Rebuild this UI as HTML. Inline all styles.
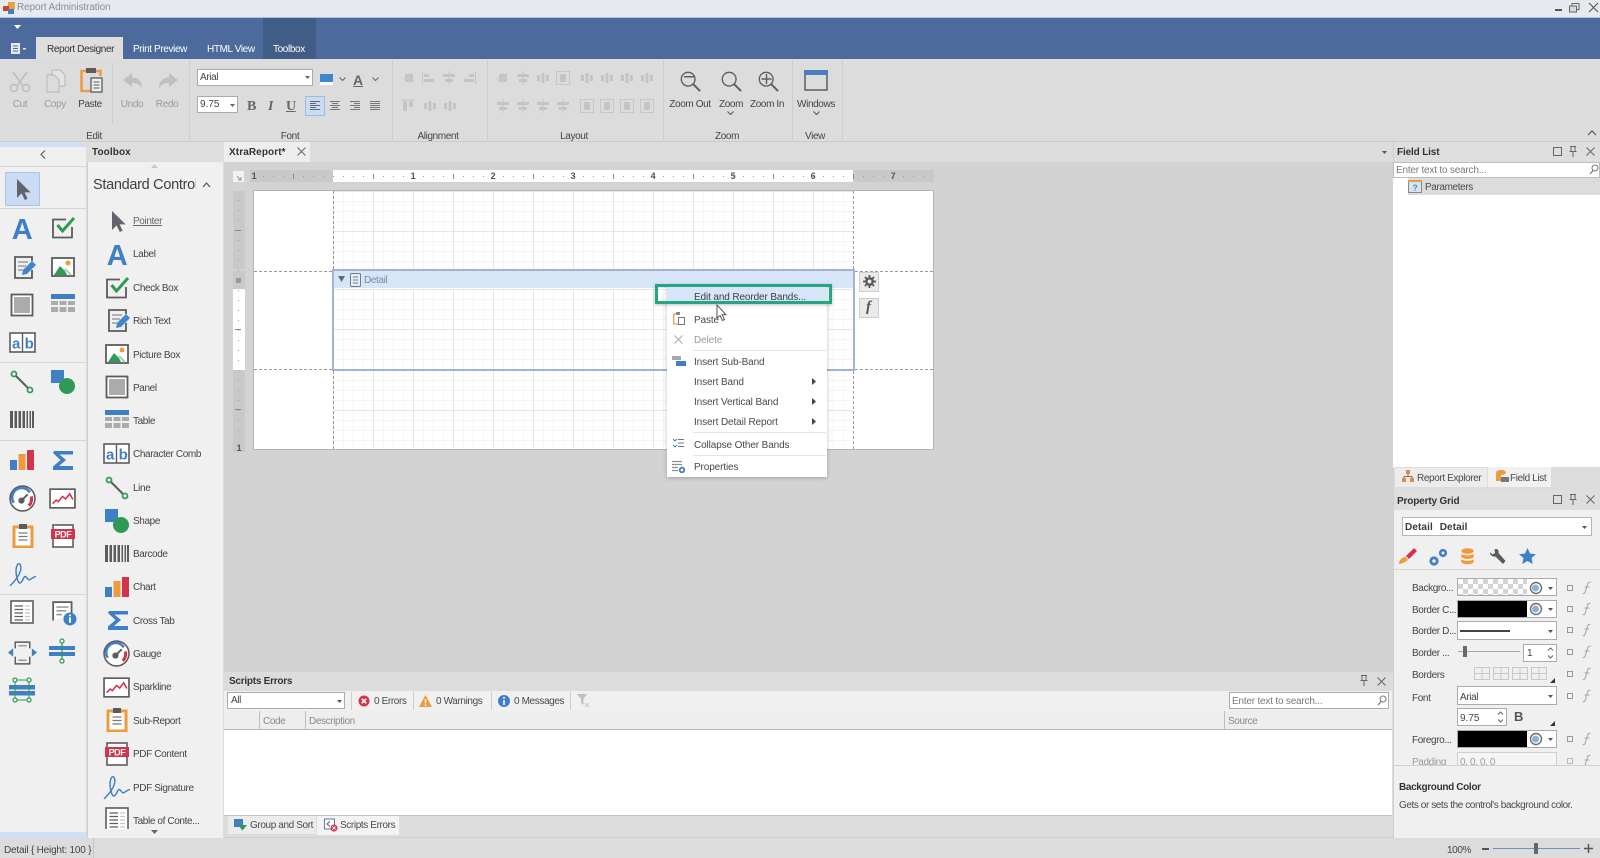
<!DOCTYPE html>
<html lang="en"><head><meta charset="utf-8"><title>Report Administration</title>
<style>
html,body{margin:0;padding:0;background:#dcdcdc}
#r{position:relative;width:1600px;height:858px;overflow:hidden;background:#dcdcdc;font:10px "Liberation Sans",sans-serif;color:#444;letter-spacing:-.38px;filter:blur(.3px)}
#r div,#r svg,#r span.t{position:absolute}
.t{white-space:nowrap;line-height:14px;height:14px;margin-top:2px}
.c{transform:translateX(-50%)}
.b{font-weight:bold;color:#333;letter-spacing:-.15px}
.g{color:#9a9a9a}
.m{letter-spacing:-.12px}
.ln{background:#cdcdcd}
.combo{background:#fff;border:1px solid #ababab;box-sizing:border-box}
.gr{background-color:#fff;background-image:linear-gradient(#e6e6e6 1px,transparent 1px),linear-gradient(90deg,#e6e6e6 1px,transparent 1px),linear-gradient(#f5f5f5 1px,transparent 1px),linear-gradient(90deg,#f5f5f5 1px,transparent 1px);background-size:40px 40px,40px 40px,10px 10px,10px 10px}
.dot{height:1px;background:repeating-linear-gradient(90deg,#999 0,#999 1px,transparent 1px,transparent 10px)}
.vdot{width:1px;background:repeating-linear-gradient(#999 0,#999 1px,transparent 1px,transparent 10px)}
.dh{height:0;border-top:1px dashed #9a9a9a}
.dv{width:0;border-left:1px dashed #9a9a9a}
.num{font:bold 9px "Liberation Sans",sans-serif;color:#555;line-height:12px;white-space:nowrap;transform:translateX(-50%)}
.tab{background:#eeeeee}
</style></head><body><div id="r">
<svg width="0" height="0" style="left:0;top:0"><defs>
<symbol id="ptr" viewBox="0 0 24 24"><path d="M6 2V21L10.6 16.4L13.8 23L16.6 21.8L13.6 15.4H19.6Z" fill="#63636c"/></symbol>
<symbol id="chk" viewBox="0 0 24 24"><path d="M20 11V21.500H1V3.500H14" fill="none" stroke="#5c5c5c" stroke-width="1.800"/><path d="M5.500 9L10.500 15L22 2" fill="none" stroke="#2f9a55" stroke-width="3"/></symbol>
<symbol id="rich" viewBox="0 0 24 24"><path d="M20 6V2H3V23H20V15" fill="none" stroke="#5c5c5c" stroke-width="1.800"/><path d="M6 7H16M6 11H14M6 15H11" stroke="#9a9a9a" stroke-width="1.400"/><path d="M10 20L11 15L20 6L24 10L15 19Z" fill="#3f86d0"/></symbol>
<symbol id="pic" viewBox="0 0 24 24"><rect x="1" y="3" width="22" height="18" fill="#fff" stroke="#5c5c5c" stroke-width="1.800"/><path d="M3 20L9 11L14 16L16 20Z" fill="#2f9a55"/><circle cx="17" cy="8" r="2.500" fill="#ef9a3d"/><path d="M14 14L20 20" stroke="#a9cfae" stroke-width="2"/></symbol>
<symbol id="pan" viewBox="0 0 24 24"><rect x="1.500" y="1.500" width="21" height="21" fill="#fff" stroke="#5c5c5c" stroke-width="1.800"/><rect x="4" y="4" width="16" height="16" fill="#ababab"/></symbol>
<symbol id="tbl" viewBox="0 0 24 24"><rect x="0" y="2" width="24" height="5" fill="#3f7fc5"/><path d="M0 9H7V13H0ZM8.500 9H15.500V13H8.500ZM17 9H24V13H17ZM0 15H7V20H0ZM8.500 15H15.500V20H8.500ZM17 15H24V20H17Z" fill="#ababab"/></symbol>
<symbol id="lin" viewBox="0 0 24 24"><path d="M5 5L19 19" stroke="#5c5c5c" stroke-width="2"/><circle cx="4" cy="4" r="2.500" fill="#fff" stroke="#2f9a55" stroke-width="1.800"/><circle cx="20" cy="20" r="2.500" fill="#fff" stroke="#2f9a55" stroke-width="1.800"/></symbol>
<symbol id="shp" viewBox="0 0 24 24"><rect x="0" y="0" width="13" height="13" fill="#3f7fc5"/><circle cx="16" cy="16" r="8" fill="#2f9a55"/></symbol>
<symbol id="bar" viewBox="0 0 24 24"><path d="M0 3H3V20H0ZM4.500 3H7V20H4.500ZM8.500 3H11V20H8.500ZM12.500 3H15V20H12.500ZM16.500 3H18V20H16.500ZM19.500 3H21V20H19.500ZM22 3H24V20H22Z" fill="#5c5c5c"/></symbol>
<symbol id="cht" viewBox="0 0 24 24"><rect x="0" y="12" width="7" height="10" fill="#3f7fc5"/><rect x="8.500" y="6" width="7" height="16" fill="#ef9a3d"/><rect x="17" y="2" width="7" height="20" fill="#d43449"/></symbol>
<symbol id="sig" viewBox="0 0 24 24"><path d="M3 3H22V6.500H8.500L15 12L8 18H22V22H2V18.500L9.500 12L2 5Z" fill="#3f7fc5"/></symbol>
<symbol id="gau" viewBox="0 0 26 26"><circle cx="13" cy="13" r="12" fill="#fff" stroke="#5c5c5c" stroke-width="1.500"/><path d="M4.500 17A9 9 0 0 1 20 7" fill="none" stroke="#3f7fc5" stroke-width="2.500"/><path d="M21.500 11A9 9 0 0 1 19 20" fill="none" stroke="#d43449" stroke-width="3"/><circle cx="12" cy="15" r="3" fill="#5c5c5c"/><path d="M12 15L18 9" stroke="#5c5c5c" stroke-width="1.800"/></symbol>
<symbol id="spk" viewBox="0 0 26 24"><rect x="1" y="3" width="24" height="18" fill="#fff" stroke="#5c5c5c" stroke-width="1.600"/><path d="M3.500 17L7 13.500L9 15L13 10L16 12.500L20 7.500L23 13" fill="none" stroke="#d43449" stroke-width="1.500"/></symbol>
<symbol id="sub" viewBox="0 0 24 24"><rect x="3" y="3" width="18" height="20" fill="#fff" stroke="#ef9a3d" stroke-width="3"/><rect x="8" y="0" width="8" height="5" fill="#5c5c5c"/><path d="M7.500 9H16.500M7.500 12.500H16.500M7.500 16H16.500" stroke="#7a7a7a" stroke-width="1.300"/></symbol>
<symbol id="psg" viewBox="0 0 26 26"><path d="M1 24C7 18 13 10 11 4C9 0 6 5 7 13C8 18 9 22 11 21C14 19 14 14 16 15C18 16 18 19 20 18C22 17 24 15 26 15" fill="none" stroke="#3f7fc5" stroke-width="1.400"/></symbol>
<symbol id="toc" viewBox="0 0 24 24"><rect x="1" y="1" width="22" height="22" fill="#fff" stroke="#5c5c5c" stroke-width="1.600"/><path d="M4.500 6H13M4.500 9.500H13M4.500 13H13M4.500 16.500H13M4.500 20H13" stroke="#5c5c5c" stroke-width="1.300"/><path d="M15.500 6H20M15.500 9.500H20M15.500 13H20M15.500 16.500H20M15.500 20H20" stroke="#7a8fa8" stroke-width="1.300" stroke-dasharray="1 1"/></symbol>
<symbol id="inf" viewBox="0 0 24 24"><path d="M2 19V2H19V12" fill="#fff" stroke="#5c5c5c" stroke-width="1.600"/><path d="M5 6.500H16M5 10H14M5 13.500H10" stroke="#8d8d8d" stroke-width="1.300"/><circle cx="17.500" cy="17.500" r="6" fill="#3f7fc5"/><path d="M17.500 16V21M17.500 13.500V15" stroke="#fff" stroke-width="1.800"/></symbol>
<symbol id="fit" viewBox="0 0 28 24"><path d="M7 8V2H21V8M7 16V23H21V16" fill="none" stroke="#5c5c5c" stroke-width="1.400"/><path d="M10 5.500H18M10 19.500H18" stroke="#999" stroke-width="1.400"/><path d="M0 12L5 8V16ZM28 12L23 8V16Z" fill="#3f7fc5"/></symbol>
<symbol id="spl" viewBox="0 0 26 26"><rect x="0" y="8" width="26" height="4" fill="#3f7fc5"/><rect x="0" y="14" width="26" height="4" fill="#3f7fc5"/><path d="M13 4V22" stroke="#2f9a55" stroke-width="1.300"/><circle cx="13" cy="3" r="2" fill="#fff" stroke="#2f9a55" stroke-width="1.300"/><circle cx="13" cy="23" r="2" fill="#fff" stroke="#2f9a55" stroke-width="1.300"/></symbol>
<symbol id="spl2" viewBox="0 0 26 26"><rect x="0" y="8" width="26" height="4.500" fill="#3f7fc5"/><rect x="0" y="14" width="26" height="4.500" fill="#3f7fc5"/><path d="M6 4V22M20 4V22M6 3H20M6 23H20" stroke="#2f9a55" stroke-width="1"/><circle cx="6" cy="3" r="2" fill="#fff" stroke="#2f9a55" stroke-width="1.300"/><circle cx="20" cy="3" r="2" fill="#fff" stroke="#2f9a55" stroke-width="1.300"/><circle cx="6" cy="23" r="2" fill="#fff" stroke="#2f9a55" stroke-width="1.300"/><circle cx="20" cy="23" r="2" fill="#fff" stroke="#2f9a55" stroke-width="1.300"/></symbol>
<symbol id="a1" viewBox="0 0 14 14"><rect x="3" y="3" width="8" height="8" fill="#c4c4c4"/><path d="M7 0V14M0 7H14" stroke="#cdcdcd" stroke-dasharray="1 1"/></symbol>
<symbol id="a2" viewBox="0 0 14 14"><rect x="2" y="8" width="10" height="3" fill="#c4c4c4"/><rect x="2" y="3" width="5" height="3" fill="#c4c4c4"/><path d="M.5 1V13" stroke="#c4c4c4"/></symbol>
<symbol id="a2r" viewBox="0 0 14 14"><rect x="2" y="8" width="10" height="3" fill="#c4c4c4"/><rect x="7" y="3" width="5" height="3" fill="#c4c4c4"/><path d="M13.500 1V13" stroke="#c4c4c4"/></symbol>
<symbol id="a3" viewBox="0 0 14 14"><rect x="1" y="3" width="12" height="3" fill="#c4c4c4"/><rect x="3" y="8" width="8" height="3" fill="#c4c4c4"/><path d="M7 0V14" stroke="#c4c4c4"/></symbol>
<symbol id="a4" viewBox="0 0 14 14"><rect x="2" y="2" width="4" height="10" fill="#c4c4c4"/><rect x="8" y="2" width="4" height="6" fill="#c4c4c4"/><path d="M0 1H14" stroke="#c4c4c4"/></symbol>
<symbol id="a5" viewBox="0 0 14 14"><rect x=".5" y=".5" width="13" height="13" fill="none" stroke="#c6c6c6"/><rect x="4" y="3" width="6" height="8" fill="#c4c4c4"/></symbol>
<symbol id="a6" viewBox="0 0 14 14"><path d="M1 4H4V10H1ZM5.500 2H8.500V12H5.500ZM10 4H13V10H10Z" fill="#c4c4c4"/></symbol>
<symbol id="wh" viewBox="0 0 14 14"><circle cx="7" cy="7" r="5.500" fill="#fff" stroke="#6e6e6e" stroke-width="1.400"/><circle cx="6.500" cy="7" r="3.500" fill="#8fb0d2"/></symbol>
<symbol id="f" viewBox="0 0 10 14"><path d="M8.500 1.500C6 .8 5.500 2.500 5 5L3.500 10C3 12 2.200 13 .8 12.500M2.500 6H7.500" fill="none" stroke="#a8a8a8" stroke-width="1.100"/></symbol>
<symbol id="brd" viewBox="0 0 16 14"><rect x=".5" y=".5" width="15" height="12" fill="none" stroke="#c8c8c8"/><path d="M8 0V13M0 6.500H16" stroke="#c8c8c8"/></symbol>
<symbol id="mag" viewBox="0 0 24 24"><circle cx="10" cy="10" r="7.500" fill="none" stroke="#5e5e5e" stroke-width="1.500"/><path d="M15.500 15.500L23 23" stroke="#5e5e5e" stroke-width="2.200"/></symbol>
</defs></svg>

<!-- title bar -->
<div style="left:0;top:0;width:1600px;height:17px;background:#e6e9ee"></div>
<svg style="left:3px;top:2px" width="12" height="12" viewBox="0 0 12 12"><rect x="5" y="0" width="7" height="7" fill="#e8a33a"/><rect x="0" y="4" width="6" height="5" fill="#c8452f"/><rect x="5" y="7" width="6" height="5" fill="#3f7fc5"/></svg>
<span class="t" style="left:17px;top:-1px;color:#8b8e93;letter-spacing:-.1px">Report Administration</span>
<div style="left:1555px;top:9px;width:7px;height:2px;background:#555"></div>
<svg style="left:1569px;top:3px" width="11" height="10" viewBox="0 0 11 10"><rect x="3" y=".5" width="7" height="6" fill="none" stroke="#666"/><rect x=".5" y="3" width="7" height="6" fill="#d6d8dc" stroke="#666"/></svg>
<svg style="left:1588px;top:2px" width="11" height="11" viewBox="0 0 11 11"><path d="M1 1L10 10M10 1L1 10" stroke="#555" stroke-width="1.100"/></svg>

<!-- blue header -->
<div style="left:0;top:17px;width:1600px;height:42px;background:#4c6b9c;border-top:1px solid #a9c4e4;box-sizing:border-box"></div>
<svg style="left:14px;top:25px" width="7" height="4"><path d="M0 0H7L3.500 4Z" fill="#fff"/></svg>
<svg style="left:11px;top:43px" width="15" height="12" viewBox="0 0 15 12"><rect x="0" y="0" width="9" height="11" fill="#e6e9ee"/><path d="M2 3H7M2 5.500H7M2 8H7" stroke="#4c6b9c"/><rect x="12" y="5" width="3" height="1.500" fill="#e6e9ee"/></svg>
<div style="left:36px;top:37px;width:87px;height:22px;background:#dedede"></div>
<span class="t" style="left:47px;top:41px;color:#333">Report Designer</span>
<span class="t" style="left:133px;top:41px;color:#fff">Print Preview</span>
<span class="t" style="left:207px;top:41px;color:#fff">HTML View</span>
<div style="left:263px;top:18px;width:53px;height:41px;background:#405c87"></div>
<span class="t" style="left:273px;top:41px;color:#fff">Toolbox</span>

<!-- ribbon -->
<div style="left:0;top:59px;width:1600px;height:83px;background:#dcdcdc;border-bottom:1px solid #cbcbcb;box-sizing:border-box"></div>
<div class="ln" style="left:189px;top:60px;width:1px;height:80px"></div>
<div class="ln" style="left:392px;top:60px;width:1px;height:80px"></div>
<div class="ln" style="left:487px;top:60px;width:1px;height:80px"></div>
<div class="ln" style="left:663px;top:60px;width:1px;height:80px"></div>
<div class="ln" style="left:792px;top:60px;width:1px;height:80px"></div>
<div class="ln" style="left:842px;top:60px;width:1px;height:80px"></div>
<div class="ln" style="left:112px;top:64px;width:1px;height:60px"></div>

<svg style="left:9px;top:71px" width="22" height="22" viewBox="0 0 22 22"><path d="M4 1L14 15M18 1L8 15" stroke="#bdbdbd" stroke-width="1.600"/><circle cx="5" cy="17" r="3.500" fill="none" stroke="#bdbdbd" stroke-width="1.500"/><circle cx="17" cy="17" r="3.500" fill="none" stroke="#bdbdbd" stroke-width="1.500"/></svg>
<svg style="left:45px;top:69px" width="21" height="24" viewBox="0 0 21 24"><path d="M7 1H15L20 6V17H7Z" fill="#e4e4e4" stroke="#bdbdbd" stroke-width="1.200"/><path d="M2 6H9L14 11V23H2Z" fill="#dcdcdc" stroke="#bdbdbd" stroke-width="1.200"/></svg>
<svg style="left:80px;top:67px" width="23" height="26" viewBox="0 0 23 26"><path d="M7 4H1.500V24H11" fill="none" stroke="#ef9a3d" stroke-width="2.500"/><path d="M16 4H20.500V9" fill="none" stroke="#ef9a3d" stroke-width="2.500"/><rect x="6" y="1" width="10" height="5" fill="#5c5c5c"/><rect x="11" y="11" width="11" height="14" fill="#eee" stroke="#5c5c5c" stroke-width="1.300"/><path d="M13.500 15H19.500M13.500 18H19.500M13.500 21H19.500" stroke="#5c5c5c"/></svg>
<svg style="left:122px;top:72px" width="21" height="18" viewBox="0 0 21 18"><path d="M1 8L10 1V5.500C16 5.500 20 9 20 16C17 12 14 11 10 11V15Z" fill="#c0c0c0"/></svg>
<svg style="left:158px;top:72px" width="21" height="18" viewBox="0 0 21 18"><path d="M20 8L11 1V5.500C5 5.500 1 9 1 16C4 12 7 11 11 11V15Z" fill="#c0c0c0"/></svg>
<span class="t c g" style="left:20px;top:96px">Cut</span>
<span class="t c g" style="left:55px;top:96px">Copy</span>
<span class="t c" style="left:90px;top:96px">Paste</span>
<span class="t c g" style="left:132px;top:96px">Undo</span>
<span class="t c g" style="left:167px;top:96px">Redo</span>

<div class="combo" style="left:197px;top:69px;width:116px;height:17px"></div>
<span class="t" style="left:200px;top:69px;color:#444">Arial</span>
<svg style="left:305px;top:76px" width="5" height="3"><path d="M0 0H5L2.500 3Z" fill="#666"/></svg>
<div class="combo" style="left:197px;top:96px;width:41px;height:17px"></div>
<span class="t" style="left:200px;top:96px;color:#444;letter-spacing:0">9.75</span>
<svg style="left:230px;top:104px" width="5" height="3"><path d="M0 0H5L2.500 3Z" fill="#666"/></svg>
<div style="left:320px;top:74px;width:13px;height:8px;background:#3f86d0"></div>
<div style="left:320px;top:82px;width:13px;height:3px;background:#fff"></div>
<svg style="left:339px;top:77px" width="7" height="5"><path d="M.5 .5L3.500 3.500L6.500 .5" fill="none" stroke="#666"/></svg>
<span class="t b" style="left:353px;top:71px;font-size:14px;color:#666;text-decoration:underline">A</span>
<svg style="left:372px;top:77px" width="7" height="5"><path d="M.5 .5L3.500 3.500L6.500 .5" fill="none" stroke="#666"/></svg>
<span class="t" style="left:247px;top:98px;font:bold 14px/14px 'Liberation Serif',serif;color:#666">B</span>
<span class="t" style="left:268px;top:98px;font:italic bold 14px/14px 'Liberation Serif',serif;color:#666">I</span>
<span class="t" style="left:286px;top:98px;font:bold 14px/14px 'Liberation Serif',serif;color:#666;text-decoration:underline">U</span>
<div style="left:305px;top:96px;width:20px;height:20px;background:#c9dcf3;border:1px solid #9fbde0;box-sizing:border-box"></div>
<svg style="left:310px;top:101px" width="10" height="9"><path d="M0 .5H10M0 2.500H6M0 4.500H10M0 6.500H6M0 8.500H10" stroke="#667"/></svg>
<svg style="left:330px;top:101px" width="10" height="9"><path d="M0 .5H10M2 2.500H8M0 4.500H10M2 6.500H8M0 8.500H10" stroke="#777"/></svg>
<svg style="left:350px;top:101px" width="10" height="9"><path d="M0 .5H10M4 2.500H10M0 4.500H10M4 6.500H10M0 8.500H10" stroke="#777"/></svg>
<svg style="left:370px;top:101px" width="10" height="9"><path d="M0 .5H10M0 2.500H10M0 4.500H10M0 6.500H10M0 8.500H10" stroke="#777"/></svg>

<svg style="left:402px;top:71px" width="14" height="14"><use href="#a1"/></svg>
<svg style="left:422px;top:71px" width="14" height="14"><use href="#a2"/></svg>
<svg style="left:442px;top:71px" width="14" height="14"><use href="#a3"/></svg>
<svg style="left:462px;top:71px" width="14" height="14"><use href="#a2r"/></svg>
<svg style="left:401px;top:99px" width="14" height="14"><use href="#a4"/></svg>
<svg style="left:423px;top:99px" width="14" height="14"><use href="#a6"/></svg>
<svg style="left:443px;top:99px" width="14" height="14"><use href="#a6"/></svg>

<svg style="left:496px;top:71px" width="14" height="14"><use href="#a1"/></svg>
<svg style="left:516px;top:71px" width="14" height="14"><use href="#a3"/></svg>
<svg style="left:536px;top:71px" width="14" height="14"><use href="#a6"/></svg>
<svg style="left:556px;top:71px" width="14" height="14"><use href="#a5"/></svg>
<svg style="left:580px;top:71px" width="14" height="14"><use href="#a6"/></svg>
<svg style="left:600px;top:71px" width="14" height="14"><use href="#a6"/></svg>
<svg style="left:620px;top:71px" width="14" height="14"><use href="#a6"/></svg>
<svg style="left:640px;top:71px" width="14" height="14"><use href="#a6"/></svg>
<svg style="left:496px;top:99px" width="14" height="14"><use href="#a3"/></svg>
<svg style="left:516px;top:99px" width="14" height="14"><use href="#a3"/></svg>
<svg style="left:536px;top:99px" width="14" height="14"><use href="#a3"/></svg>
<svg style="left:556px;top:99px" width="14" height="14"><use href="#a3"/></svg>
<svg style="left:580px;top:99px" width="14" height="14"><use href="#a5"/></svg>
<svg style="left:600px;top:99px" width="14" height="14"><use href="#a5"/></svg>
<svg style="left:620px;top:99px" width="14" height="14"><use href="#a5"/></svg>
<svg style="left:640px;top:99px" width="14" height="14"><use href="#a5"/></svg>

<svg style="left:679px;top:70px" width="22" height="22"><use href="#mag"/></svg>
<svg style="left:684px;top:76px;" width="10" height="2"><rect width="10" height="1.500" fill="#5e5e5e"/></svg>
<svg style="left:720px;top:70px" width="22" height="22"><use href="#mag"/></svg>
<svg style="left:757px;top:70px" width="22" height="22"><use href="#mag"/></svg>
<svg style="left:761px;top:74px" width="11" height="11"><path d="M5.500 0V10M.5 5H10.500" stroke="#5e5e5e" stroke-width="1.400"/></svg>
<span class="t c" style="left:690px;top:96px">Zoom Out</span>
<span class="t c" style="left:731px;top:96px">Zoom</span>
<span class="t c" style="left:767px;top:96px">Zoom In</span>
<svg style="left:727px;top:111px" width="7" height="5"><path d="M.5 .5L3.500 3.500L6.500 .5" fill="none" stroke="#555"/></svg>
<svg style="left:804px;top:70px" width="24" height="21" viewBox="0 0 24 21"><rect x="1" y="1" width="22" height="19" fill="none" stroke="#5e5e5e" stroke-width="1.500"/><rect x="0" y="0" width="24" height="5" fill="#4a7fbe"/></svg>
<span class="t c" style="left:816px;top:96px">Windows</span>
<svg style="left:813px;top:111px" width="7" height="5"><path d="M.5 .5L3.500 3.500L6.500 .5" fill="none" stroke="#555"/></svg>
<span class="t c" style="left:94px;top:128px">Edit</span>
<span class="t c" style="left:290px;top:128px">Font</span>
<span class="t c" style="left:438px;top:128px">Alignment</span>
<span class="t c" style="left:574px;top:128px">Layout</span>
<span class="t c" style="left:727px;top:128px">Zoom</span>
<span class="t c" style="left:815px;top:128px">View</span>
<svg style="left:1587px;top:130px" width="10" height="6"><path d="M1 5L5 1L9 5" fill="none" stroke="#555" stroke-width="1.200"/></svg>

<!-- left palette -->
<div style="left:0;top:142px;width:86px;height:696px;background:#f0f0f0"></div>
<div style="left:0;top:142px;width:86px;height:5px;background:#cfe0f5"></div>
<div style="left:0;top:832px;width:86px;height:6px;background:#cfe0f5"></div>
<div style="left:0;top:166px;width:86px;height:1px;background:#d6d6d6"></div>
<svg style="left:40px;top:150px" width="6" height="9"><path d="M5 .5L1 4.500L5 8.500" fill="none" stroke="#555" stroke-width="1.100"/></svg>
<div style="left:5px;top:172px;width:35px;height:34px;background:#c9dcf3;border:1px solid #a9c4e4;box-sizing:border-box"></div>
<div class="ln" style="left:0;top:208px;width:86px;height:1px;background:#d6d6d6"></div>
<div class="ln" style="left:0;top:362px;width:86px;height:1px;background:#d6d6d6"></div>
<div class="ln" style="left:0;top:440px;width:86px;height:1px;background:#d6d6d6"></div>
<div class="ln" style="left:0;top:594px;width:86px;height:1px;background:#d6d6d6"></div>

<svg style="left:11px;top:177px" width="24" height="24"><use href="#ptr"/></svg>
<svg style="left:10px;top:215px" width="24" height="26"><text x="12" y="24" text-anchor="middle" font-family="Liberation Sans" font-weight="bold" font-size="29" fill="#3f7fc5">A</text></svg>
<svg style="left:52px;top:216px" width="24" height="24"><use href="#chk"/></svg>
<svg style="left:12px;top:255px" width="24" height="24"><use href="#rich"/></svg>
<svg style="left:51px;top:255px" width="24" height="24"><use href="#pic"/></svg>
<svg style="left:10px;top:293px" width="24" height="24"><use href="#pan"/></svg>
<svg style="left:51px;top:292px" width="24" height="24"><use href="#tbl"/></svg>
<svg style="left:9px;top:332px" width="27" height="22" viewBox="0 0 27 22"><rect x="1" y="1" width="25" height="19" fill="#fff" stroke="#5c5c5c" stroke-width="1.600"/><path d="M13.500 1V20" stroke="#5c5c5c" stroke-width="1.400"/><text x="7" y="16.500" text-anchor="middle" font-family="Liberation Sans" font-weight="bold" font-size="15" fill="#3f7fc5">a</text><text x="20" y="16.500" text-anchor="middle" font-family="Liberation Sans" font-weight="bold" font-size="15" fill="#3f7fc5">b</text></svg>
<svg style="left:10px;top:370px" width="24" height="24"><use href="#lin"/></svg>
<svg style="left:51px;top:370px" width="24" height="24"><use href="#shp"/></svg>
<svg style="left:10px;top:408px" width="24" height="24"><use href="#bar"/></svg>
<svg style="left:10px;top:448px" width="24" height="24"><use href="#cht"/></svg>
<svg style="left:51px;top:448px" width="24" height="24"><use href="#sig"/></svg>
<svg style="left:9px;top:485px" width="27" height="27"><use href="#gau"/></svg>
<svg style="left:49px;top:486px" width="27" height="25"><use href="#spk"/></svg>
<svg style="left:11px;top:524px" width="24" height="24"><use href="#sub"/></svg>
<svg style="left:51px;top:524px" width="24" height="24" viewBox="0 0 24 24"><rect x="2" y="1" width="20" height="22" fill="#fff" stroke="#5c5c5c" stroke-width="1.600"/><rect x="0" y="5" width="24" height="10" fill="#d43449"/><text x="12" y="13.500" text-anchor="middle" font-family="Liberation Sans" font-weight="bold" font-size="9" fill="#fff">PDF</text></svg>
<svg style="left:9px;top:561px" width="27" height="27"><use href="#psg"/></svg>
<svg style="left:10px;top:600px" width="24" height="24"><use href="#toc"/></svg>
<svg style="left:51px;top:600px" width="26" height="26"><use href="#inf"/></svg>
<svg style="left:8px;top:640px" width="29" height="25"><use href="#fit"/></svg>
<svg style="left:49px;top:638px" width="26" height="26"><use href="#spl"/></svg>
<svg style="left:9px;top:677px" width="26" height="26"><use href="#spl2"/></svg>

<!-- toolbox -->
<div style="left:87px;top:142px;width:136px;height:696px;background:#f0f0f0;border-left:1px solid #cfcfcf;box-sizing:border-box"></div>
<div style="left:87px;top:142px;width:136px;height:20px;background:#dedede"></div>
<span class="t b" style="left:92px;top:144px;letter-spacing:.1px">Toolbox</span>
<svg style="left:151px;top:164px" width="7" height="4"><path d="M0 4H7L3.500 0Z" fill="#c8c8c8"/></svg>
<span class="t" style="left:93px;top:176px;font-size:14.500px;line-height:15px;height:15px;width:103px;overflow:hidden;letter-spacing:-.3px;color:#3f3f3f">Standard Controls</span>
<svg style="left:202px;top:182px" width="9" height="6"><path d="M1 5L4.500 1L8 5" fill="none" stroke="#555" stroke-width="1.200"/></svg>

<svg style="left:106px;top:209px" width="24" height="24"><use href="#ptr"/></svg><span class="t" style="left:133px;top:213px;text-decoration:underline;color:#666">Pointer</span>
<svg style="left:105px;top:241px" width="24" height="26"><text x="12" y="24" text-anchor="middle" font-family="Liberation Sans" font-weight="bold" font-size="29" fill="#3f7fc5">A</text></svg><span class="t" style="left:133px;top:246px">Label</span>
<svg style="left:106px;top:276px" width="24" height="24"><use href="#chk"/></svg><span class="t" style="left:133px;top:280px">Check Box</span>
<svg style="left:106px;top:308px" width="24" height="24"><use href="#rich"/></svg><span class="t" style="left:133px;top:313px">Rich Text</span>
<svg style="left:105px;top:342px" width="24" height="24"><use href="#pic"/></svg><span class="t" style="left:133px;top:347px">Picture Box</span>
<svg style="left:105px;top:375px" width="24" height="24"><use href="#pan"/></svg><span class="t" style="left:133px;top:380px">Panel</span>
<svg style="left:105px;top:408px" width="24" height="24"><use href="#tbl"/></svg><span class="t" style="left:133px;top:413px">Table</span>
<svg style="left:103px;top:443px" width="27" height="22" viewBox="0 0 27 22"><rect x="1" y="1" width="25" height="19" fill="#fff" stroke="#5c5c5c" stroke-width="1.600"/><path d="M13.500 1V20" stroke="#5c5c5c" stroke-width="1.400"/><text x="7" y="16.500" text-anchor="middle" font-family="Liberation Sans" font-weight="bold" font-size="15" fill="#3f7fc5">a</text><text x="20" y="16.500" text-anchor="middle" font-family="Liberation Sans" font-weight="bold" font-size="15" fill="#3f7fc5">b</text></svg><span class="t" style="left:133px;top:446px">Character Comb</span>
<svg style="left:105px;top:476px" width="24" height="24"><use href="#lin"/></svg><span class="t" style="left:133px;top:480px">Line</span>
<svg style="left:105px;top:509px" width="24" height="24"><use href="#shp"/></svg><span class="t" style="left:133px;top:513px">Shape</span>
<svg style="left:105px;top:542px" width="24" height="24"><use href="#bar"/></svg><span class="t" style="left:133px;top:546px">Barcode</span>
<svg style="left:105px;top:575px" width="24" height="24"><use href="#cht"/></svg><span class="t" style="left:133px;top:579px">Chart</span>
<svg style="left:106px;top:608px" width="24" height="24"><use href="#sig"/></svg><span class="t" style="left:133px;top:613px">Cross Tab</span>
<svg style="left:103px;top:640px" width="27" height="27"><use href="#gau"/></svg><span class="t" style="left:133px;top:646px">Gauge</span>
<svg style="left:103px;top:675px" width="27" height="25"><use href="#spk"/></svg><span class="t" style="left:133px;top:679px">Sparkline</span>
<svg style="left:105px;top:708px" width="24" height="24"><use href="#sub"/></svg><span class="t" style="left:133px;top:713px">Sub-Report</span>
<svg style="left:105px;top:742px" width="24" height="24" viewBox="0 0 24 24"><rect x="2" y="1" width="20" height="22" fill="#fff" stroke="#5c5c5c" stroke-width="1.600"/><rect x="0" y="5" width="24" height="10" fill="#d43449"/><text x="12" y="13.500" text-anchor="middle" font-family="Liberation Sans" font-weight="bold" font-size="9" fill="#fff">PDF</text></svg><span class="t" style="left:133px;top:746px">PDF Content</span>
<svg style="left:103px;top:774px" width="27" height="27"><use href="#psg"/></svg><span class="t" style="left:133px;top:780px">PDF Signature</span>
<div style="left:105px;top:807px;width:24px;height:22px;overflow:hidden"><svg style="left:0;top:0" width="24" height="24"><use href="#toc"/></svg></div><span class="t" style="left:133px;top:813px">Table of Conte...</span>
<svg style="left:151px;top:830px" width="7" height="4"><path d="M0 0H7L3.500 4Z" fill="#666"/></svg>

<!-- doc tabs -->
<div style="left:223px;top:142px;width:1170px;height:20px;background:#dcdcdc"></div>
<div class="tab" style="left:224px;top:142px;width:86px;height:20px"></div>
<span class="t b" style="left:229px;top:144px;letter-spacing:.1px">XtraReport*</span>
<svg style="left:297px;top:147px" width="9" height="9"><path d="M.5 .5L8.500 8.500M8.500 .5L.5 8.500" stroke="#666"/></svg>
<svg style="left:1382px;top:151px" width="5" height="3"><path d="M0 0H5L2.500 3Z" fill="#555"/></svg>

<!-- design surface -->
<div style="left:224px;top:162px;width:1169px;height:510px;background:#d3d3d3"></div>
<div style="left:233px;top:171px;width:11px;height:11px;background:#f2f2f2"></div>
<svg style="left:237px;top:176px" width="5" height="5"><path d="M0 0L4 4M4 1V4H1" fill="none" stroke="#999"/></svg>
<div style="left:250px;top:170px;width:83px;height:12px;background:#c9c9c9"></div>
<div style="left:333px;top:170px;width:520px;height:12px;background:#fff"></div>
<div style="left:853px;top:170px;width:81px;height:12px;background:#c9c9c9"></div>
<div class="dot" style="left:263px;top:176px;width:670px"></div>
<div class="num" style="left:254px;top:170px">1</div>
<div class="num" style="left:413px;top:170px">1</div>
<div class="num" style="left:493px;top:170px">2</div>
<div class="num" style="left:573px;top:170px">3</div>
<div class="num" style="left:653px;top:170px">4</div>
<div class="num" style="left:733px;top:170px">5</div>
<div class="num" style="left:813px;top:170px">6</div>
<div class="num" style="left:893px;top:170px">7</div>
<div style="left:293px;top:174px;width:1px;height:5px;background:#888"></div>
<div style="left:373px;top:174px;width:1px;height:5px;background:#888"></div>
<div style="left:453px;top:174px;width:1px;height:5px;background:#888"></div>
<div style="left:533px;top:174px;width:1px;height:5px;background:#888"></div>
<div style="left:613px;top:174px;width:1px;height:5px;background:#888"></div>
<div style="left:693px;top:174px;width:1px;height:5px;background:#888"></div>
<div style="left:773px;top:174px;width:1px;height:5px;background:#888"></div>
<div style="left:853px;top:174px;width:1px;height:5px;background:#888"></div>

<div style="left:233px;top:191px;width:12px;height:78px;background:#c9c9c9"></div>
<div style="left:233px;top:271px;width:12px;height:18px;background:#c9c9c9"></div>
<div style="left:233px;top:289px;width:12px;height:81px;background:#fff"></div>
<div style="left:233px;top:370px;width:12px;height:82px;background:#c9c9c9"></div>
<div class="vdot" style="left:238px;top:200px;width:1px;height:240px"></div>
<div style="left:235px;top:230px;width:6px;height:1px;background:#888"></div>
<div style="left:235px;top:329px;width:6px;height:1px;background:#888"></div>
<div style="left:235px;top:409px;width:6px;height:1px;background:#888"></div>
<div style="left:236px;top:278px;width:5px;height:5px;background:#999"></div>
<div class="num" style="left:239px;top:442px">1</div>

<div style="left:253px;top:190px;width:681px;height:260px;background:#fff;border:1px solid #b4b4b4;box-sizing:border-box"></div>
<div class="gr" style="left:333px;top:191px;width:520px;height:79px"></div>
<div class="gr" style="left:333px;top:289px;width:520px;height:81px"></div>
<div class="gr" style="left:333px;top:370px;width:520px;height:79px"></div>
<div class="dh" style="left:254px;top:271px;width:679px"></div>
<div class="dh" style="left:254px;top:369px;width:679px"></div>
<div class="dv" style="left:333px;top:191px;height:258px"></div>
<div class="dv" style="left:853px;top:191px;height:258px"></div>
<div style="left:333px;top:270px;width:520px;height:18px;background:#d6e5f8"></div>
<div style="left:332px;top:269px;width:523px;height:102px;border:2px solid #a0b3d0;box-sizing:border-box"></div>
<svg style="left:338px;top:276px" width="7" height="6"><path d="M0 0H7L3.500 6Z" fill="#5e6c7e"/></svg>
<svg style="left:350px;top:273px" width="11" height="14" viewBox="0 0 11 14"><rect x=".5" y=".5" width="10" height="13" rx="1" fill="#e4ecf6" stroke="#6f7f93"/><path d="M3 4H8M3 7H8M3 10H8" stroke="#6f7f93"/></svg>
<span class="t" style="left:364px;top:272px;color:#7c8ca2">Detail</span>

<div style="left:859px;top:272px;width:20px;height:20px;background:#eaeaea;border:1px solid #cdcdcd;box-sizing:border-box"></div>
<svg style="left:863px;top:275px" width="13" height="13" viewBox="0 0 13 13"><circle cx="6.500" cy="6.500" r="3.200" fill="none" stroke="#555" stroke-width="2.400"/><path d="M6.500 0V13M0 6.500H13M2 2L11 11M11 2L2 11" stroke="#555" stroke-width="1.800" stroke-dasharray="2.200 8.600 2.200 0"/></svg>
<div style="left:859px;top:298px;width:20px;height:20px;background:#eaeaea;border:1px solid #cdcdcd;box-sizing:border-box"></div>
<span class="t" style="left:866px;top:298px;font:italic bold 15px/15px 'Liberation Serif',serif;color:#555">f</span>

<!-- context menu -->
<div style="left:667px;top:286px;width:160px;height:191px;background:#fff;box-shadow:0 1px 4px rgba(0,0,0,.25)"></div>
<div style="left:667px;top:286px;width:160px;height:17px;background:#d6e5f8"></div>
<div style="left:655px;top:284px;width:177px;height:20px;border:3px solid #25a682;box-sizing:border-box;box-shadow:0 1px 3px rgba(0,0,0,.25)"></div>
<span class="t m" style="left:694px;top:289px;color:#3f3f3f">Edit and Reorder Bands...</span>
<span class="t m" style="left:694px;top:312px;color:#4a4a4a">Paste</span>
<span class="t g m" style="left:694px;top:332px">Delete</span>
<span class="t m" style="left:694px;top:354px;color:#4a4a4a">Insert Sub-Band</span>
<span class="t m" style="left:694px;top:374px;color:#4a4a4a">Insert Band</span>
<span class="t m" style="left:694px;top:394px;color:#4a4a4a">Insert Vertical Band</span>
<span class="t m" style="left:694px;top:414px;color:#4a4a4a">Insert Detail Report</span>
<span class="t m" style="left:694px;top:437px;color:#4a4a4a">Collapse Other Bands</span>
<span class="t m" style="left:694px;top:459px;color:#4a4a4a">Properties</span>
<div style="left:693px;top:350px;width:133px;height:1px;background:#e4e4e4"></div>
<div style="left:693px;top:432px;width:133px;height:1px;background:#e4e4e4"></div>
<div style="left:693px;top:455px;width:133px;height:1px;background:#e4e4e4"></div>
<svg style="left:812px;top:378px" width="4" height="7"><path d="M0 0L4 3.500L0 7Z" fill="#444"/></svg>
<svg style="left:812px;top:398px" width="4" height="7"><path d="M0 0L4 3.500L0 7Z" fill="#444"/></svg>
<svg style="left:812px;top:418px" width="4" height="7"><path d="M0 0L4 3.500L0 7Z" fill="#444"/></svg>
<svg style="left:673px;top:312px" width="12" height="13" viewBox="0 0 12 13"><path d="M3 2H.7V12H5" fill="none" stroke="#e6a25c" stroke-width="1.300"/><rect x="3" y="0" width="4" height="3" fill="#888"/><rect x="5.500" y="5.500" width="6" height="7" fill="#fff" stroke="#777"/></svg>
<svg style="left:674px;top:335px" width="9" height="9"><path d="M.5 .5L8.500 8.500M8.500 .5L.5 8.500" stroke="#b0b0b0" stroke-width="1.200"/></svg>
<svg style="left:672px;top:356px" width="14" height="10"><rect x="0" y="0" width="9" height="4" fill="#a8a8a8"/><rect x="4" y="5" width="10" height="5" fill="#3f7fc5"/></svg>
<svg style="left:673px;top:438px" width="11" height="10"><path d="M5 1.500H11M5 5H11M5 8.500H11" stroke="#777" stroke-width="1.100"/><path d="M0 1L2 3L4 1M0 7L2 9L4 7" fill="none" stroke="#3f7fc5"/></svg>
<svg style="left:672px;top:460px" width="13" height="13"><path d="M0 1.500H10M0 4.500H10M0 7.500H6M0 10.500H6" stroke="#8e8e8e" stroke-width="1.200"/><circle cx="10" cy="10" r="2.300" fill="#fff" stroke="#3f7fc5" stroke-width="1.800"/></svg>
<svg style="left:716px;top:304px" width="13" height="18" viewBox="0 0 13 18"><path d="M1 1V14L4 11.500L6.500 16.500L8.500 15.500L6.200 10.800H10Z" fill="#fff" stroke="#555" stroke-width="1"/></svg>

<!-- right panels -->
<div style="left:1393px;top:142px;width:207px;height:696px;background:#f0f0f0;border-left:1px solid #cfcfcf;box-sizing:border-box"></div>
<div style="left:1394px;top:142px;width:206px;height:20px;background:#dedede"></div>
<span class="t b" style="left:1397px;top:144px">Field List</span>
<svg style="left:1553px;top:147px" width="9" height="9"><rect x=".5" y=".5" width="8" height="8" fill="none" stroke="#666"/></svg>
<svg style="left:1569px;top:146px" width="8" height="11"><path d="M1 .5H7M2 .5V5M6 .5V5M.5 5.500H7.500M4 5.500V11" fill="none" stroke="#666"/></svg>
<svg style="left:1586px;top:147px" width="9" height="9"><path d="M.5 .5L8.500 8.500M8.500 .5L.5 8.500" stroke="#666"/></svg>
<div style="left:1393px;top:162px;width:207px;height:306px;background:#fff"></div>
<div style="left:1393px;top:162px;width:207px;height:16px;background:#fff;border:1px solid #bdbdbd;box-sizing:border-box"></div>
<span class="t" style="left:1396px;top:162px;color:#7a7a7a;letter-spacing:-.2px">Enter text to search...</span>
<svg style="left:1589px;top:164px" width="10" height="11"><circle cx="6" cy="4" r="3" fill="none" stroke="#777"/><path d="M4 6.500L1 10" stroke="#777" stroke-width="1.200"/></svg>
<div style="left:1408px;top:178px;width:192px;height:17px;background:#dcdcdc"></div>
<svg style="left:1408px;top:180px" width="14" height="13" viewBox="0 0 14 13"><rect x=".5" y=".5" width="13" height="12" fill="#d9e3ee" stroke="#888"/><rect x="0" y="0" width="14" height="2" fill="#e59a4e"/><text x="7" y="10.500" text-anchor="middle" font-family="Liberation Sans" font-weight="bold" font-size="8" fill="#3f7fc5">?</text></svg>
<span class="t" style="left:1425px;top:179px;color:#4a4a4a">Parameters</span>

<div style="left:1394px;top:467px;width:206px;height:23px;background:#dcdcdc"></div>
<div style="left:1395px;top:468px;width:92px;height:19px;background:#ececec"></div>
<div style="left:1488px;top:467px;width:63px;height:20px;background:#f1f1f1"></div>
<svg style="left:1402px;top:470px" width="12" height="12"><rect x="4" y="0" width="4" height="4" fill="#e08a3c"/><rect x="0" y="8" width="4" height="4" fill="#e08a3c"/><rect x="8" y="8" width="4" height="4" fill="#e08a3c"/><path d="M6 4V6.500M2 8V6.500H10V8" fill="none" stroke="#777"/></svg>
<span class="t" style="left:1417px;top:470px;color:#4a4a4a">Report Explorer</span>
<svg style="left:1496px;top:470px" width="13" height="13"><ellipse cx="5" cy="2.500" rx="5" ry="2.500" fill="#ef9a3d"/><rect x="0" y="3" width="5" height="8" fill="#ef9a3d"/><rect x="5" y="7" width="8" height="5" fill="#777"/></svg>
<span class="t" style="left:1510px;top:470px;color:#4a4a4a">Field List</span>

<div style="left:1394px;top:490px;width:206px;height:20px;background:#dedede"></div>
<span class="t b" style="left:1397px;top:493px">Property Grid</span>
<svg style="left:1553px;top:495px" width="9" height="9"><rect x=".5" y=".5" width="8" height="8" fill="none" stroke="#666"/></svg>
<svg style="left:1569px;top:494px" width="8" height="11"><path d="M1 .5H7M2 .5V5M6 .5V5M.5 5.500H7.500M4 5.500V11" fill="none" stroke="#666"/></svg>
<svg style="left:1586px;top:495px" width="9" height="9"><path d="M.5 .5L8.500 8.500M8.500 .5L.5 8.500" stroke="#666"/></svg>
<div style="left:1402px;top:517px;width:190px;height:19px;background:#fff;border:1px solid #b5b5b5;box-sizing:border-box"></div>
<span class="t b" style="left:1405px;top:519px;color:#3a3a3a;word-spacing:4px;letter-spacing:.1px">Detail Detail</span>
<svg style="left:1582px;top:526px" width="5" height="3"><path d="M0 0H5L2.500 3Z" fill="#555"/></svg>

<svg style="left:1398px;top:547px" width="20" height="18" viewBox="0 0 20 18"><path d="M1 17C1 13 4 10 8 10L10 13C7 15 4 17 1 17Z" fill="#ef9a3d"/><path d="M8 9L16 1L19 4L11 12Z" fill="#d43449"/></svg>
<svg style="left:1429px;top:548px" width="19" height="18" viewBox="0 0 19 18"><circle cx="14" cy="5" r="2.800" fill="none" stroke="#3f7fc5" stroke-width="2.600"/><circle cx="5" cy="13" r="3.200" fill="none" stroke="#3f7fc5" stroke-width="2.800"/></svg>
<svg style="left:1461px;top:548px" width="13" height="17" viewBox="0 0 13 17"><ellipse cx="6.500" cy="3" rx="6.200" ry="2.800" fill="#ef9a3d"/><path d="M.3 5.500C2 8 11 8 12.700 5.500V9C11 11.500 2 11.500 .3 9ZM.3 11C2 13.500 11 13.500 12.700 11V14C11 17 2 17 .3 14Z" fill="#ef9a3d"/></svg>
<svg style="left:1489px;top:548px" width="17" height="17" viewBox="0 0 17 17"><path d="M1 4L3.500 6.500L6 5L5.500 1.500C8 0 10 2 9.500 5L16.500 13L14 16L6.500 8.500C3 9 1 7 1 4Z" fill="#5a5a5a"/></svg>
<svg style="left:1519px;top:548px" width="17" height="16" viewBox="0 0 17 16"><path d="M8.500 0L11 5.500L17 6.200L12.500 10L13.800 16L8.500 13L3.200 16L4.500 10L0 6.200L6 5.500Z" fill="#3f7fc5"/></svg>
<div style="left:1394px;top:569px;width:206px;height:1px;background:#d4d4d4"></div>

<span class="t" style="left:1412px;top:580px">Backgro...</span>
<span class="t" style="left:1412px;top:602px">Border C...</span>
<span class="t" style="left:1412px;top:623px">Border D...</span>
<span class="t" style="left:1412px;top:645px">Border ...</span>
<span class="t" style="left:1412px;top:667px">Borders</span>
<span class="t" style="left:1412px;top:690px">Font</span>
<span class="t" style="left:1412px;top:732px">Foregro...</span>
<span class="t g" style="left:1412px;top:754px">Padding</span>

<div class="combo" style="left:1457px;top:578px;width:100px;height:18px"></div>
<div style="left:1458px;top:579px;width:69px;height:16px;background:conic-gradient(#d4d4d4 25%,#fff 0 50%,#d4d4d4 0 75%,#fff 0);background-size:10px 10px"></div>
<svg style="left:1529px;top:581px" width="14" height="14"><use href="#wh"/></svg>
<svg style="left:1548px;top:587px" width="5" height="3"><path d="M0 0H5L2.500 3Z" fill="#555"/></svg>
<div class="combo" style="left:1457px;top:600px;width:100px;height:18px"></div>
<div style="left:1458px;top:601px;width:69px;height:16px;background:#000"></div>
<svg style="left:1529px;top:602px" width="14" height="14"><use href="#wh"/></svg>
<svg style="left:1548px;top:608px" width="5" height="3"><path d="M0 0H5L2.500 3Z" fill="#555"/></svg>
<div class="combo" style="left:1457px;top:621px;width:100px;height:19px"></div>
<div style="left:1460px;top:630px;width:50px;height:1.500px;background:#444"></div>
<svg style="left:1548px;top:630px" width="5" height="3"><path d="M0 0H5L2.500 3Z" fill="#555"/></svg>
<div style="left:1458px;top:651px;width:62px;height:1px;background:#aaa"></div>
<div style="left:1463px;top:646px;width:4px;height:11px;background:#6a6a6a"></div>
<div class="combo" style="left:1523px;top:644px;width:34px;height:18px"></div>
<span class="t" style="left:1527px;top:645px">1</span>
<svg style="left:1547px;top:647px" width="7" height="12"><path d="M1 3.500L3.500 1L6 3.500M1 8.500L3.500 11L6 8.500" fill="none" stroke="#666"/></svg>
<svg style="left:1474px;top:667px" width="16" height="14"><use href="#brd"/></svg>
<svg style="left:1493px;top:667px" width="16" height="14"><use href="#brd"/></svg>
<svg style="left:1512px;top:667px" width="16" height="14"><use href="#brd"/></svg>
<svg style="left:1531px;top:667px" width="16" height="14"><use href="#brd"/></svg>
<svg style="left:1550px;top:678px" width="5" height="5"><path d="M5 0V5H0Z" fill="#333"/></svg>
<div class="combo" style="left:1457px;top:686px;width:100px;height:19px"></div>
<span class="t" style="left:1460px;top:689px">Arial</span>
<svg style="left:1548px;top:695px" width="5" height="3"><path d="M0 0H5L2.500 3Z" fill="#555"/></svg>
<div class="combo" style="left:1457px;top:708px;width:50px;height:18px"></div>
<span class="t" style="left:1460px;top:710px;letter-spacing:0">9.75</span>
<svg style="left:1497px;top:711px" width="7" height="12"><path d="M1 3.500L3.500 1L6 3.500M1 8.500L3.500 11L6 8.500" fill="none" stroke="#666"/></svg>
<span class="t" style="left:1514px;top:708px;font:bold 13px/14px 'Liberation Sans',sans-serif;color:#555">B</span>
<svg style="left:1550px;top:721px" width="5" height="5"><path d="M5 0V5H0Z" fill="#333"/></svg>
<div class="combo" style="left:1457px;top:730px;width:100px;height:18px"></div>
<div style="left:1458px;top:731px;width:69px;height:16px;background:#000"></div>
<svg style="left:1529px;top:732px" width="14" height="14"><use href="#wh"/></svg>
<svg style="left:1548px;top:738px" width="5" height="3"><path d="M0 0H5L2.500 3Z" fill="#555"/></svg>
<div style="left:1457px;top:752px;width:100px;height:14px;background:#f5f5f5;border:1px solid #cfcfcf;box-sizing:border-box"></div>
<span class="t g" style="left:1460px;top:754px">0, 0, 0, 0</span>

<svg style="left:1567px;top:585px" width="6" height="6"><rect x=".5" y=".5" width="5" height="5" fill="none" stroke="#999"/></svg><svg style="left:1582px;top:581px" width="10" height="14"><use href="#f"/></svg>
<svg style="left:1567px;top:606px" width="6" height="6"><rect x=".5" y=".5" width="5" height="5" fill="none" stroke="#999"/></svg><svg style="left:1582px;top:602px" width="10" height="14"><use href="#f"/></svg>
<svg style="left:1567px;top:627px" width="6" height="6"><rect x=".5" y=".5" width="5" height="5" fill="none" stroke="#999"/></svg><svg style="left:1582px;top:623px" width="10" height="14"><use href="#f"/></svg>
<svg style="left:1567px;top:649px" width="6" height="6"><rect x=".5" y=".5" width="5" height="5" fill="none" stroke="#999"/></svg><svg style="left:1582px;top:645px" width="10" height="14"><use href="#f"/></svg>
<svg style="left:1567px;top:671px" width="6" height="6"><rect x=".5" y=".5" width="5" height="5" fill="none" stroke="#999"/></svg><svg style="left:1582px;top:667px" width="10" height="14"><use href="#f"/></svg>
<svg style="left:1567px;top:693px" width="6" height="6"><rect x=".5" y=".5" width="5" height="5" fill="none" stroke="#999"/></svg><svg style="left:1582px;top:689px" width="10" height="14"><use href="#f"/></svg>
<svg style="left:1567px;top:736px" width="6" height="6"><rect x=".5" y=".5" width="5" height="5" fill="none" stroke="#999"/></svg><svg style="left:1582px;top:732px" width="10" height="14"><use href="#f"/></svg>
<svg style="left:1567px;top:758px" width="6" height="6"><rect x=".5" y=".5" width="5" height="5" fill="none" stroke="#bbb"/></svg><svg style="left:1582px;top:754px" width="10" height="14"><use href="#f"/></svg>

<div style="left:1394px;top:765px;width:206px;height:73px;background:#f0f0f0;border-top:1px solid #d0d0d0;box-sizing:border-box"></div>
<span class="t b" style="left:1399px;top:779px;letter-spacing:-.35px">Background Color</span>
<span class="t" style="left:1399px;top:797px;color:#4a4a4a;letter-spacing:-.42px">Gets or sets the control's background color.</span>

<!-- scripts errors -->
<div style="left:224px;top:672px;width:1169px;height:166px;background:#dcdcdc"></div>
<span class="t b" style="left:229px;top:673px;letter-spacing:-.25px">Scripts Errors</span>
<svg style="left:1360px;top:675px" width="8" height="11"><path d="M1 .5H7M2 .5V5M6 .5V5M.5 5.500H7.500M4 5.500V11" fill="none" stroke="#666"/></svg>
<svg style="left:1377px;top:677px" width="9" height="9"><path d="M.5 .5L8.500 8.500M8.500 .5L.5 8.500" stroke="#666"/></svg>
<div style="left:224px;top:691px;width:1168px;height:20px;background:#f0f0f0"></div>
<div class="combo" style="left:227px;top:692px;width:118px;height:17px"></div>
<span class="t" style="left:231px;top:692px">All</span>
<svg style="left:337px;top:700px" width="5" height="3"><path d="M0 0H5L2.500 3Z" fill="#555"/></svg>
<div class="ln" style="left:351px;top:692px;width:1px;height:18px"></div>
<svg style="left:358px;top:695px" width="12" height="12"><circle cx="6" cy="6" r="5.500" fill="#d43449"/><path d="M3.800 3.800L8.200 8.200M8.200 3.800L3.800 8.200" stroke="#fff" stroke-width="1.600"/></svg>
<span class="t" style="left:374px;top:693px;color:#4a4a4a">0 Errors</span>
<div class="ln" style="left:413px;top:692px;width:1px;height:18px"></div>
<svg style="left:419px;top:695px" width="13" height="12"><path d="M6.500 0L13 12H0Z" fill="#ef9a3d"/><path d="M6.500 4V8.500M6.500 9.500V11" stroke="#fff" stroke-width="1.300"/></svg>
<span class="t" style="left:436px;top:693px;color:#4a4a4a">0 Warnings</span>
<div class="ln" style="left:491px;top:692px;width:1px;height:18px"></div>
<svg style="left:498px;top:695px" width="12" height="12"><circle cx="6" cy="6" r="6" fill="#3f7fc5"/><path d="M6 5V10M6 2V3.800" stroke="#fff" stroke-width="1.600"/></svg>
<span class="t" style="left:514px;top:693px;color:#4a4a4a">0 Messages</span>
<div class="ln" style="left:570px;top:692px;width:1px;height:18px"></div>
<svg style="left:577px;top:694px" width="13" height="13"><path d="M0 0H10L6.500 5V11L4 9V5Z" fill="#c0c0c0"/><path d="M8 9L12 13M12 9L8 13" stroke="#c9c9c9"/></svg>
<div class="combo" style="left:1229px;top:692px;width:160px;height:17px"></div>
<span class="t" style="left:1232px;top:693px;color:#7a7a7a;letter-spacing:-.2px">Enter text to search...</span>
<svg style="left:1377px;top:695px" width="10" height="11"><circle cx="6" cy="4" r="3" fill="none" stroke="#777"/><path d="M4 6.500L1 10" stroke="#777" stroke-width="1.200"/></svg>
<div style="left:224px;top:711px;width:1168px;height:18px;background:#eeeeee;border-bottom:1px solid #b9b9b9;box-sizing:content-box"></div>
<div class="ln" style="left:259px;top:711px;width:1px;height:18px;background:#bdbdbd"></div>
<div class="ln" style="left:305px;top:711px;width:1px;height:18px;background:#bdbdbd"></div>
<div class="ln" style="left:1224px;top:711px;width:1px;height:18px;background:#bdbdbd"></div>
<span class="t" style="left:263px;top:713px;color:#8a8a8a">Code</span>
<span class="t" style="left:309px;top:713px;color:#8a8a8a">Description</span>
<span class="t" style="left:1228px;top:713px;color:#8a8a8a">Source</span>
<div style="left:224px;top:730px;width:1168px;height:85px;background:#fff;border-bottom:1px solid #c3c3c3"></div>
<div style="left:228px;top:816px;width:88px;height:18px;background:#ececec"></div>
<div style="left:317px;top:816px;width:82px;height:19px;background:#f3f3f3"></div>
<svg style="left:234px;top:819px" width="13" height="12"><rect x="0" y="0" width="9" height="8" fill="#3f7fc5"/><path d="M4 6H13L8.500 11.500Z" fill="#2f9a55"/></svg>
<span class="t" style="left:250px;top:817px;color:#4a4a4a">Group and Sort</span>
<svg style="left:324px;top:818px" width="14" height="14"><rect x=".5" y="1" width="10" height="10" fill="#fff" stroke="#5c7da6"/><path d="M6 3.500L3 6L6 8.500" fill="none" stroke="#5c5c5c"/><circle cx="10" cy="10" r="3.500" fill="#d43449"/><path d="M8.500 8.500L11.500 11.500M11.500 8.500L8.500 11.500" stroke="#fff"/></svg>
<span class="t" style="left:340px;top:817px;color:#4a4a4a">Scripts Errors</span>
<div style="left:224px;top:837px;width:1169px;height:1px;background:#cfcfcf"></div>

<!-- status bar -->
<div style="left:0;top:838px;width:1600px;height:20px;background:#dcdcdc"></div>
<span class="t" style="left:4px;top:842px;color:#444;letter-spacing:-.2px">Detail { Height: 100 }</span>
<div class="ln" style="left:93px;top:838px;width:1px;height:20px;background:#c3c3c3"></div>
<span class="t" style="left:1447px;top:842px;color:#444">100%</span>
<div style="left:1482px;top:848px;width:7px;height:1.500px;background:#555"></div>
<div style="left:1493px;top:848px;width:87px;height:1px;background:#6f8fb5"></div>
<div style="left:1534px;top:843px;width:4px;height:11px;background:#666"></div>
<svg style="left:1584px;top:844px" width="9" height="9"><path d="M4.500 0V9M0 4.500H9" stroke="#555" stroke-width="1.500"/></svg>
</div></body></html>
